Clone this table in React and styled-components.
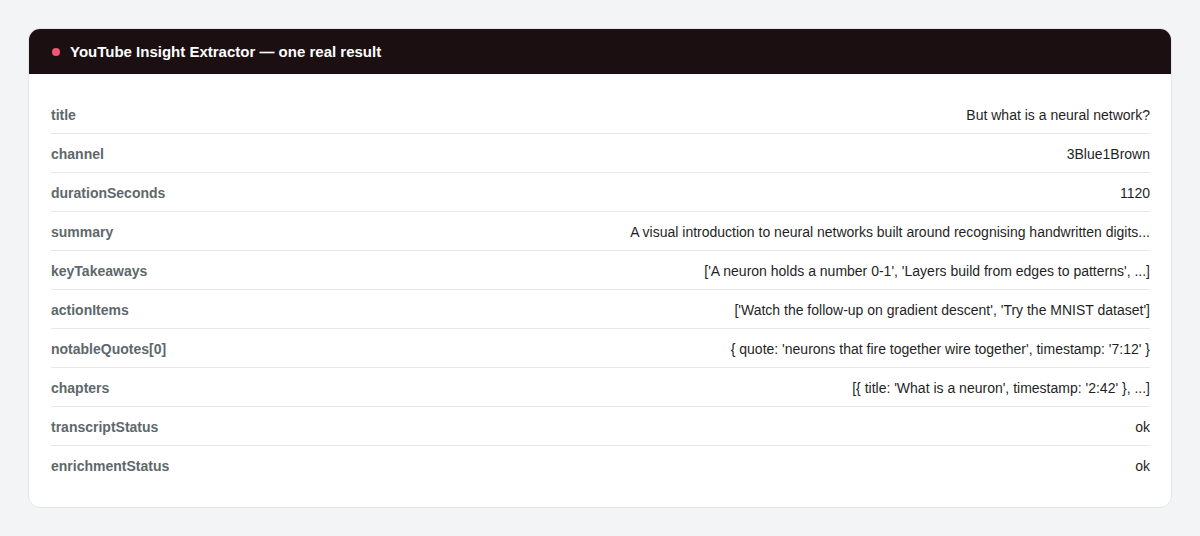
import React from 'react';
import styled, { createGlobalStyle } from 'styled-components';

const GlobalStyle = createGlobalStyle`
  html, body {
    margin: 0;
    padding: 0;
    background: #f3f4f6;
    font-family: "Liberation Sans", Arial, sans-serif;
  }
`;

const Page = styled.div`
  padding: 28px 28px;
  min-height: 536px;
  box-sizing: border-box;
`;

const Card = styled.div`
  background: #ffffff;
  border: 1px solid #e3e5e8;
  border-radius: 12px;
  overflow: hidden;
`;

const Header = styled.div`
  height: 45px;
  background: #1b0f12;
  display: flex;
  align-items: center;
  padding: 0 22px 0 23px;
  gap: 10px;
`;

const Dot = styled.span`
  width: 8px;
  height: 8px;
  border-radius: 50%;
  background: #f25672;
`;

const Title = styled.h1`
  margin: 0;
  font-size: 15px;
  font-weight: 700;
  color: #ffffff;
`;

const Body = styled.div`
  padding: 21px 21px 22px 22px;
`;

const Row = styled.div`
  height: 39px;
  display: flex;
  align-items: center;
  justify-content: space-between;
  padding-top: 1px;
  border-bottom: ${p => (p.$last ? 'none' : '1px solid #e6e8ea')};
  box-sizing: border-box;
`;

const Label = styled.span`
  font-size: 14px;
  font-weight: 700;
  color: #5e686b;
`;

const Value = styled.span`
  font-size: 14px;
  color: #1f1f1f;
  text-align: right;
`;

const rows = [
  ['title', 'But what is a neural network?'],
  ['channel', '3Blue1Brown'],
  ['durationSeconds', '1120'],
  ['summary', 'A visual introduction to neural networks built around recognising handwritten digits...'],
  ['keyTakeaways', "['A neuron holds a number 0-1', 'Layers build from edges to patterns', ...]"],
  ['actionItems', "['Watch the follow-up on gradient descent', 'Try the MNIST dataset']"],
  ['notableQuotes[0]', "{ quote: 'neurons that fire together wire together', timestamp: '7:12' }"],
  ['chapters', "[{ title: 'What is a neuron', timestamp: '2:42' }, ...]"],
  ['transcriptStatus', 'ok'],
  ['enrichmentStatus', 'ok'],
];

const App = () => {
  return (
    <Page>
      <GlobalStyle />
      <Card>
        <Header>
          <Dot />
          <Title>YouTube Insight Extractor — one real result</Title>
        </Header>
        <Body>
          {rows.map(([k, v], i) => (
            <Row key={k} $last={i === rows.length - 1}>
              <Label>{k}</Label>
              <Value>{v}</Value>
            </Row>
          ))}
        </Body>
      </Card>
    </Page>
  );
};

export default App;
